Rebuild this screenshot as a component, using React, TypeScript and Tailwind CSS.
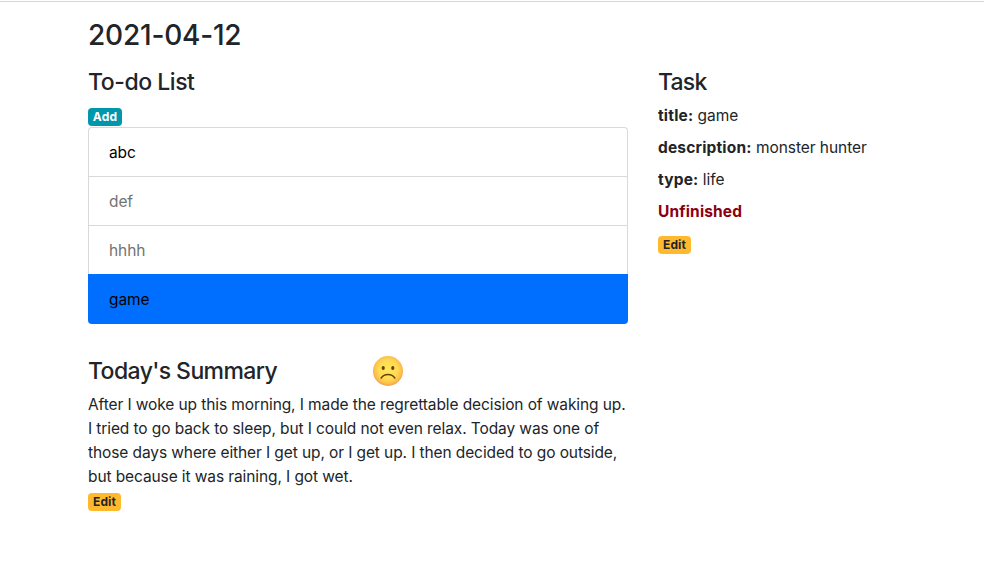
import React from "react";

function Badge({ children, className }: { children: React.ReactNode; className: string }) {
  return (
    <button
      className={`flex h-[18px] items-center justify-center rounded-[4px] text-[12px] leading-none font-bold tracking-[0.15px] ${className}`}
    >
      {children}
    </button>
  );
}

function SadFace() {
  return (
    <svg viewBox="0 0 32 32" className="h-8 w-8">
      <defs>
        <radialGradient id="face" cx="50%" cy="46%" r="54%">
          <stop offset="0%" stopColor="#ffe658" />
          <stop offset="58%" stopColor="#ffdc52" />
          <stop offset="84%" stopColor="#fdbf4c" />
          <stop offset="100%" stopColor="#f59a48" />
        </radialGradient>
      </defs>
      <circle cx="16" cy="16" r="15" fill="url(#face)" />
      <ellipse cx="11.2" cy="13.1" rx="1.6" ry="2" fill="#6b3f0b" />
      <ellipse cx="20.8" cy="13.1" rx="1.6" ry="2" fill="#6b3f0b" />
      <path
        d="M9.2 23 C12.2 18.4 19.8 18.4 22.8 23"
        fill="none"
        stroke="#6b3f0b"
        strokeWidth="1.5"
        strokeLinecap="round"
      />
    </svg>
  );
}

const todos = [
  { name: "abc", className: "text-black" },
  { name: "def", className: "text-[#737373]" },
  { name: "hhhh", className: "text-[#737373]" },
];

const summary = [
  "After I woke up this morning, I made the regrettable decision of waking up.",
  "I tried to go back to sleep, but I could not even relax. Today was one of",
  "those days where either I get up, or I get up. I then decided to go outside,",
  "but because it was raining, I got wet.",
];

export default function App() {
  return (
    <div className="h-[585px] overflow-hidden bg-white pt-px font-['Inter','Liberation_Sans',sans-serif] text-[15.5px] leading-6 tracking-[-0.1px] text-[#212529]">
      <div className="border-t border-[#d5d5d5] pt-4 pl-[88px]">
        <h3 className="h-[34px] text-[28px] leading-[34px] font-medium tracking-[-0.2px]">2021-04-12</h3>
        <div className="mt-4 flex gap-[30px]">
          <main className="w-[540px]">
            <h4 className="text-[23px] leading-[29px] font-medium tracking-[-0.45px]">To-do List</h4>
            <Badge className="mt-[11px] w-[34px] bg-[#0097ac] text-white">Add</Badge>
            <ul className="mt-px">
              {todos.map((todo, i) => (
                <li
                  key={todo.name}
                  className={`h-[49px] border-x border-t border-[#d9d9d9] pt-[13px] pl-5 ${i === 0 ? "rounded-t-[4px]" : ""} ${todo.className}`}
                >
                  {todo.name}
                </li>
              ))}
              <li className="h-[50px] rounded-b-[4px] bg-[#006fff] pt-[14px] pl-[21px] text-black">game</li>
            </ul>
            <div className="mt-[30px] flex h-[34px] items-center">
              <h4 className="w-[284px] text-[23px] leading-[29px] font-medium tracking-[-0.6px]">
                Today&apos;s Summary
              </h4>
              <SadFace />
            </div>
            <div className="mt-[5px] whitespace-nowrap">
              {summary.map((line) => (
                <p key={line}>{line}</p>
              ))}
            </div>
            <Badge className="mt-1 w-[33px] bg-[#ffb92e] text-[#212529]">Edit</Badge>
          </main>
          <aside className="whitespace-nowrap">
            <h4 className="text-[23px] leading-[29px] font-medium tracking-[-0.8px]">Task</h4>
            <div className="mt-[7px] flex flex-col gap-2 tracking-[-0.05px]">
              <p><b className="tracking-[0.18px]">title:</b> game</p>
              <p><b className="tracking-[0.18px]">description:</b> monster hunter</p>
              <p><b className="tracking-[0.18px]">type:</b> life</p>
              <p className="font-bold tracking-[0.15px] text-[#8b0010]">Unfinished</p>
            </div>
            <Badge className="mt-3 w-[33px] bg-[#ffb92e] text-[#212529]">Edit</Badge>
          </aside>
        </div>
      </div>
    </div>
  );
}
